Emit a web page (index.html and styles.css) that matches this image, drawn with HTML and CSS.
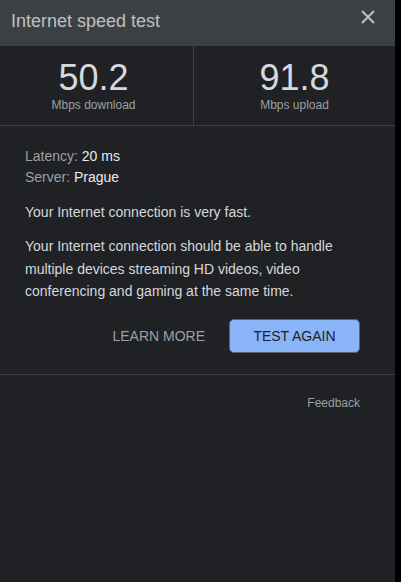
FILE: index.html
```html
<!DOCTYPE html>
<html>
<head>
<meta charset="utf-8">
<link rel="stylesheet" href="styles.css">
</head>
<body>
<div class="panel">
  <div class="header">
    <span class="title">Internet speed test</span>
    <svg class="close" width="14" height="14" viewBox="0 0 14 14"><path d="M1 1L13 13M13 1L1 13" stroke="#bdc1c6" stroke-width="2"/></svg>
  </div>
  <div class="stats">
    <div class="stat left">
      <div class="num">50.2</div>
      <div class="unit">Mbps download</div>
    </div>
    <div class="stat">
      <div class="num">91.8</div>
      <div class="unit">Mbps upload</div>
    </div>
  </div>
  <div class="content">
    <div class="meta">
      <div><span class="lbl">Latency:</span> 20 ms</div>
      <div><span class="lbl">Server:</span> Prague</div>
    </div>
    <p class="p1">Your Internet connection is very fast.</p>
    <p class="p2">Your Internet connection should be able to handle multiple devices streaming HD videos, video conferencing and gaming at the same time.</p>
    <div class="actions">
      <span class="learn">LEARN MORE</span>
      <span class="again">TEST AGAIN</span>
    </div>
  </div>
  <div class="footer">
    <span class="feedback">Feedback</span>
  </div>
</div>
</body>
</html>
```
FILE: styles.css
```css
html, body {
  margin: 0;
  padding: 0;
  background: #000;
  height: 100%;
}
body {
  font-family: "Liberation Sans", Arial, sans-serif;
}
.panel {
  width: 395px;
  height: 582px;
  background: #202124;
}
.header {
  height: 46px;
  background: #3c4043;
  display: flex;
  align-items: center;
  justify-content: space-between;
  padding: 0 20px 0 11px;
  box-sizing: border-box;
}
.title {
  font-size: 18px;
  color: #bdc1c6;
  position: relative;
  top: -2px;
}
.close {
  position: relative;
  top: -6px;
}
.stats {
  display: grid;
  grid-template-columns: 194px 1fr;
  height: 79px;
  border-bottom: 1px solid #3c4043;
}
.stat {
  display: flex;
  flex-direction: column;
  align-items: center;
  padding-top: 12px;
}
.stat.left {
  border-right: 1px solid #3c4043;
  padding-right: 6px;
}
.num {
  font-size: 36px;
  line-height: 40px;
  color: #d5d8dc;
}
.unit {
  font-size: 12px;
  line-height: 14px;
  color: #9aa0a6;
}
.content {
  padding: 20px 35px 21px 25px;
  border-bottom: 1px solid #3c4043;
  color: #e8eaed;
  font-size: 14px;
}
.meta {
  line-height: 21px;
}
.lbl {
  color: #9aa0a6;
}
.p1 {
  margin: 14px 0 0;
  line-height: 21px;
  color: #d5d8dc;
}
.p2 {
  margin: 12px 0 0;
  line-height: 22.5px;
  color: #d5d8dc;
}
.actions {
  display: flex;
  justify-content: flex-end;
  align-items: center;
  gap: 24px;
  margin-top: 16px;
}
.learn {
  color: #9aa0a6;
  font-size: 14px;
}
.again {
  width: 131px;
  height: 34px;
  box-sizing: border-box;
  background: #8ab4f8;
  color: #202124;
  border-radius: 5px;
  border: 1px solid #5f6368;
  display: flex;
  align-items: center;
  justify-content: center;
  font-size: 14px;
}
.footer {
  display: flex;
  justify-content: flex-end;
  padding: 21px 35px 0 0;
}
.feedback {
  font-size: 12px;
  color: #9aa0a6;
}
```
